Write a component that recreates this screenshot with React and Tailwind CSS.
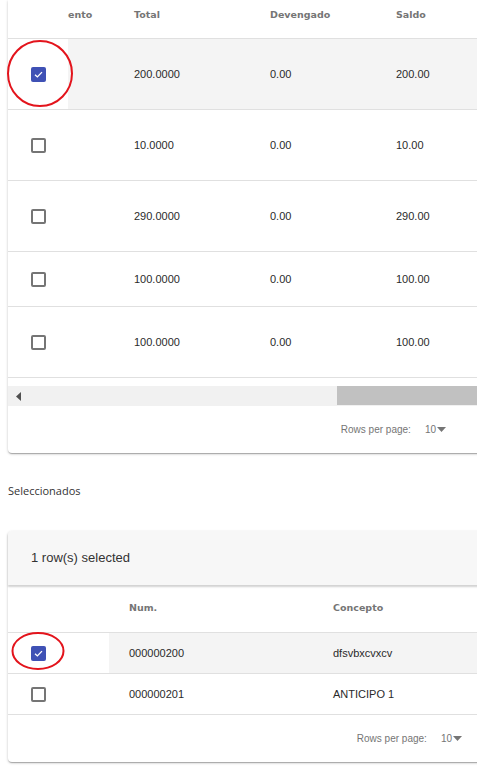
import React from "react";

const topRows = [
  { total: "200.0000", dev: "0.00", saldo: "200.00", checked: true, h: "h-[71px]" },
  { total: "10.0000", dev: "0.00", saldo: "10.00", h: "h-[71px]" },
  { total: "290.0000", dev: "0.00", saldo: "290.00", h: "h-[71px]" },
  { total: "100.0000", dev: "0.00", saldo: "100.00", h: "h-[55px]" },
  { total: "100.0000", dev: "0.00", saldo: "100.00", h: "h-[71px]" },
];

const selRows = [
  { num: "000000200", concepto: "dfsvbxcvxcv", checked: true },
  { num: "000000201", concepto: "ANTICIPO 1" },
];

const headFont = { fontFamily: '"DejaVu Sans", Verdana, sans-serif' };
const bodyFont = { fontFamily: '"Liberation Sans", Arial, sans-serif' };

function Checkbox({ checked }) {
  if (checked) {
    return (
      <div className="w-[15px] h-[15px] rounded-[2px] bg-[#3f51b5] flex items-center justify-center">
        <svg width="11" height="11" viewBox="0 0 12 12">
          <path d="M2.2 6.2 L4.8 8.6 L9.8 3.4" fill="none" stroke="white" strokeWidth="1.5" />
        </svg>
      </div>
    );
  }
  return <div className="w-[15px] h-[15px] rounded-[2px] border-2 border-[#757575]" />;
}

function Pagination({ pr }) {
  return (
    <div className={`h-[47px] flex items-center justify-end text-[10px] text-[#757575] ${pr}`} style={bodyFont}>
      <span>Rows per page:</span>
      <span className="ml-[14px]">10</span>
      <svg width="9" height="5" viewBox="0 0 9 5" className="ml-[1px]">
        <path d="M0 0 L9 0 L4.5 5 Z" fill="#757575" />
      </svg>
    </div>
  );
}

export default function App() {
  return (
    <div className="w-[477px] h-[774px] overflow-hidden bg-white pl-2">
      {/* main table */}
      <div className="w-[600px] bg-white rounded-b-[4px] shadow-[0_1px_3px_rgba(0,0,0,0.2),0_1px_1px_rgba(0,0,0,0.14),0_2px_1px_-1px_rgba(0,0,0,0.12)]">
        <div
          className="grid grid-cols-[60px_66px_136px_126px_1fr] h-[39px] border-b border-[#e0e0e0] pt-[8px] text-[9.5px] font-bold text-[#757575]"
          style={headFont}
        >
          <div />
          <div>ento</div>
          <div>Total</div>
          <div>Devengado</div>
          <div>Saldo</div>
        </div>
        {topRows.map((r, i) => (
          <div
            key={i}
            className={`grid grid-cols-[60px_66px_136px_126px_1fr] ${r.h} border-b border-[#e0e0e0] text-[11px] text-[#2a2a2a]`}
            style={bodyFont}
          >
            <div className="relative flex items-center justify-center bg-white">
              <Checkbox checked={r.checked} />
              {r.checked && (
                <svg className="absolute left-[-1px] top-[1px]" width="66" height="67" viewBox="0 0 66 67">
                  <ellipse cx="33" cy="33.5" rx="32" ry="32.5" fill="none" stroke="#e3141c" strokeWidth="2" />
                </svg>
              )}
            </div>
            <div className={`col-span-4 grid grid-cols-[66px_136px_126px_1fr] items-center ${r.checked ? "bg-[#f4f4f4]" : ""}`}>
              <div />
              <div>{r.total}</div>
              <div>{r.dev}</div>
              <div>{r.saldo}</div>
            </div>
          </div>
        ))}
        <div className="h-[8px]" />
        <div className="h-[20px] bg-[#f1f1f1] flex items-center">
          <svg width="6" height="9" viewBox="0 0 6 9" className="ml-[8px]">
            <path d="M5 0 L0 4.5 L5 9 Z" fill="#505050" />
          </svg>
          <div className="ml-[315px] h-[19px] flex-1 bg-[#c1c1c1] self-start" />
        </div>
        <Pagination pr="pr-[162px]" />
      </div>

      <div className="mt-[30px] text-[11px] leading-[15px] text-[#333]" style={{ fontFamily: '"Open Sans", sans-serif' }}>
        Seleccionados
      </div>

      {/* selected table */}
      <div className="mt-[33px] w-[600px] bg-white rounded-[4px] shadow-[0_1px_3px_rgba(0,0,0,0.2),0_1px_1px_rgba(0,0,0,0.14),0_2px_1px_-1px_rgba(0,0,0,0.12)]">
        <div
          className="h-[54px] bg-[#f7f7f7] rounded-t-[4px] flex items-center pl-[23px] text-[13px] text-[#333] shadow-[0_2px_2px_rgba(0,0,0,0.18)] relative"
          style={bodyFont}
        >
          1 row(s) selected
        </div>
        <div
          className="grid grid-cols-[101px_204px_1fr] h-[48px] border-b border-[#e0e0e0] items-center text-[9.5px] font-bold text-[#757575]"
          style={headFont}
        >
          <div />
          <div className="pl-5">Num.</div>
          <div className="pl-5">Concepto</div>
        </div>
        {selRows.map((r, i) => (
          <div
            key={i}
            className="grid grid-cols-[101px_1fr] h-[41px] border-b border-[#e0e0e0] text-[11px] text-[#2a2a2a]"
            style={bodyFont}
          >
            <div className="relative flex items-center pl-[23px] bg-white">
              <Checkbox checked={r.checked} />
              {r.checked && (
                <svg className="absolute left-[3px] top-[-1px]" width="54" height="38" viewBox="0 0 54 38">
                  <ellipse cx="27" cy="19" rx="25.5" ry="18" fill="none" stroke="#e3141c" strokeWidth="2" />
                </svg>
              )}
            </div>
            <div className={`grid grid-cols-[204px_1fr] items-center ${r.checked ? "bg-[#f4f4f4]" : ""}`}>
              <div className="pl-5">{r.num}</div>
              <div className="pl-5">{r.concepto}</div>
            </div>
          </div>
        ))}
        <Pagination pr="pr-[146px]" />
      </div>
    </div>
  );
}
